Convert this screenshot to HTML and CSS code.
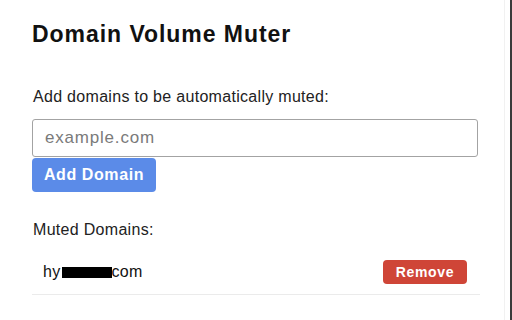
FILE: index.html
```html
<!DOCTYPE html>
<html>
<head>
<meta charset="utf-8">
<link rel="stylesheet" href="styles.css">
</head>
<body>
<div class="frame">
  <div class="panel">
    <h1 class="title">Domain Volume Muter</h1>
    <p class="label">Add domains to be automatically muted:</p>
    <input class="domain-input" type="text" placeholder="example.com">
    <button class="add-btn">Add Domain</button>
    <p class="label muted-label">Muted Domains:</p>
    <div class="row">
      <span class="domain">hy<span class="redact"></span>com</span>
      <button class="remove-btn">Remove</button>
    </div>
  </div>
</div>
</body>
</html>
```
FILE: styles.css
```css
html, body {
  margin: 0;
  padding: 0;
  background: #ffffff;
}
body {
  font-family: "Liberation Sans", Arial, sans-serif;
  color: #222;
}
.frame {
  width: 512px;
  height: 320px;
  box-sizing: border-box;
  border-right: 2px solid #3a3a3a;
  padding-right: 5px;
  display: flex;
}
.panel {
  flex: 1;
  border-right: 1px solid #f1f1f1;
  padding: 21px 24px 0 32px;
  display: flex;
  flex-direction: column;
  align-items: flex-start;
}
.title {
  margin: 0;
  font-size: 23px;
  line-height: 26px;
  font-weight: bold;
  letter-spacing: 0.95px;
  color: #111;
}
.label {
  margin: 41px 0 0 1px;
  font-size: 16px;
  line-height: 18px;
  letter-spacing: 0.3px;
  color: #222;
}
.domain-input {
  margin: 13px 0 0 0;
  width: 446px;
  height: 38px;
  box-sizing: border-box;
  border: 1px solid #a3a3a3;
  border-radius: 3px;
  padding: 0 12px;
  font-family: "Liberation Sans", Arial, sans-serif;
  font-size: 17px;
  letter-spacing: 0.8px;
  color: #222;
  outline: none;
}
.domain-input::placeholder {
  color: #7a7a7a;
}
.add-btn {
  margin-top: 1px;
  height: 34px;
  width: 124px;
  padding: 0;
  border: none;
  border-radius: 4px;
  background: #5b8be8;
  color: #fff;
  font-family: "Liberation Sans", Arial, sans-serif;
  font-size: 16px;
  font-weight: bold;
  letter-spacing: 0.6px;
}
.muted-label {
  margin-top: 29px;
}
.row {
  margin-top: 11px;
  align-self: stretch;
  display: flex;
  align-items: center;
  justify-content: space-between;
  padding: 10px 13px 10px 11px;
  border-bottom: 1px solid #ebebeb;
}
.domain {
  font-size: 16px;
  letter-spacing: 0.3px;
  color: #111;
}
.redact {
  display: inline-block;
  width: 50px;
  height: 11px;
  background: #000;
  vertical-align: -1px;
  margin-left: 1px;
}
.remove-btn {
  width: 84px;
  height: 24px;
  padding: 0;
  border: none;
  border-radius: 4px;
  background: #cf4537;
  color: #fff;
  font-family: "Liberation Sans", Arial, sans-serif;
  font-size: 14px;
  font-weight: bold;
  letter-spacing: 0.7px;
}
```
